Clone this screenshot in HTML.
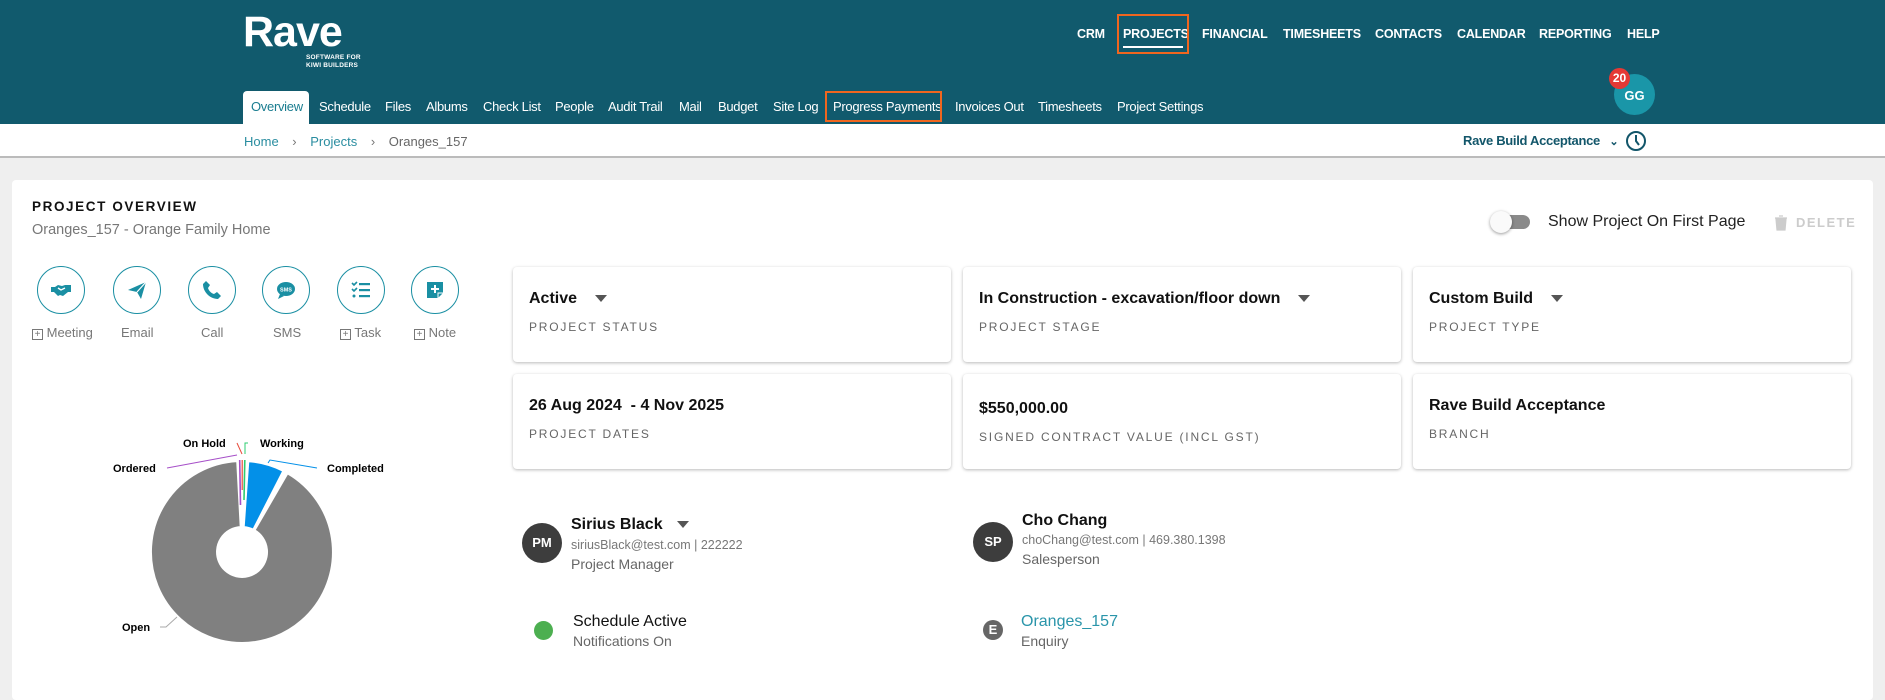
<!DOCTYPE html>
<html><head><meta charset="utf-8"><style>
*{margin:0;padding:0;box-sizing:border-box}
body{width:1885px;height:687px;overflow:hidden;background:#efefef;font-family:"Liberation Sans",sans-serif;position:relative}
.a{position:absolute;white-space:nowrap}
.hdr{position:absolute;left:0;top:0;width:1885px;height:124px;background:#115a6d}
.top{color:#fff;font-weight:bold;font-size:12.5px;top:27px;letter-spacing:-0.2px}
.tab{color:#fff;font-size:13px;top:99px;letter-spacing:-0.3px}
.crumb{position:absolute;left:0;top:124px;width:1885px;height:34px;background:#fff;border-bottom:2px solid #bbb}
.card{position:absolute;left:12px;top:180px;width:1861px;height:520px;background:#fff;border-radius:4px}
.ic{position:absolute;width:48px;height:48px;border:1.5px solid #1a8fa3;border-radius:50%;top:266px}
.ic svg{position:absolute;left:12px;top:12px}
.lbl{color:#777;font-size:13px;top:325px}
.cb{display:inline-block;width:11px;height:11px;border:1px solid #777;font-size:10px;line-height:9px;text-align:center;vertical-align:0px}
.box{position:absolute;width:438px;height:95px;background:#fff;border-radius:4px;box-shadow:0 1px 3px rgba(0,0,0,.28)}
.bt{position:absolute;left:16px;top:23px;font-size:16px;font-weight:bold;color:#111;white-space:nowrap}
.bl{position:absolute;left:16px;top:53px;font-size:12px;color:#666;letter-spacing:1.8px;white-space:nowrap}
.tri{display:inline-block;width:0;height:0;border-left:6px solid transparent;border-right:6px solid transparent;border-top:7px solid #555;margin-left:18px;vertical-align:middle}
.av{position:absolute;width:40px;height:40px;border-radius:50%;background:#3d3d3d;color:#fff;font-weight:bold;font-size:13px;text-align:center;line-height:40px}
</style></head><body>
<div class="hdr"></div>
<div class="a" style="left:243px;top:8px;color:#fff;font-weight:bold;font-size:43px;letter-spacing:-1px">Rave</div>
<div class="a" style="left:306px;top:54px;color:#fff;font-weight:bold;font-size:6.5px;line-height:8px;letter-spacing:.2px">SOFTWARE FOR<br>KIWI BUILDERS</div>
<div class="a top" style="left:1077px">CRM</div>
<div class="a top" style="left:1123px">PROJECTS</div>
<div class="a" style="left:1123px;top:46px;width:60px;height:2px;background:#fff"></div>
<div class="a" style="left:1117px;top:14px;width:72px;height:40px;border:2px solid #f0661f"></div>
<div class="a top" style="left:1202px">FINANCIAL</div>
<div class="a top" style="left:1283px">TIMESHEETS</div>
<div class="a top" style="left:1375px">CONTACTS</div>
<div class="a top" style="left:1457px">CALENDAR</div>
<div class="a top" style="left:1539px">REPORTING</div>
<div class="a top" style="left:1627px">HELP</div>
<div class="a" style="left:243px;top:91px;width:66px;height:34px;background:#fff;border-radius:4px 4px 0 0"></div>
<div class="a tab" style="left:251px;color:#1a7d90">Overview</div>
<div class="a tab" style="left:319px">Schedule</div>
<div class="a tab" style="left:385px">Files</div>
<div class="a tab" style="left:426px">Albums</div>
<div class="a tab" style="left:483px">Check List</div>
<div class="a tab" style="left:555px">People</div>
<div class="a tab" style="left:608px">Audit Trail</div>
<div class="a tab" style="left:679px">Mail</div>
<div class="a tab" style="left:718px">Budget</div>
<div class="a tab" style="left:773px">Site Log</div>
<div class="a tab" style="left:833px">Progress Payments</div>
<div class="a" style="left:825px;top:91px;width:117px;height:31px;border:2px solid #f0661f"></div>
<div class="a tab" style="left:955px">Invoices Out</div>
<div class="a tab" style="left:1038px">Timesheets</div>
<div class="a tab" style="left:1117px">Project Settings</div>
<div class="a" style="left:1614px;top:74px;width:41px;height:41px;border-radius:50%;background:#1a96a8;color:#fff;font-weight:bold;font-size:13px;text-align:center;line-height:43px">GG</div>
<div class="a" style="left:1609px;top:68px;width:21px;height:21px;border-radius:50%;background:#e53935;color:#fff;font-weight:bold;font-size:12px;text-align:center;line-height:21px">20</div>
<div class="crumb"></div>
<div class="a" style="left:244px;top:134px;font-size:13px;color:#2a8da0">Home <span style="color:#777;margin:0 10px">›</span> Projects <span style="color:#777;margin:0 10px">›</span> <span style="color:#666">Oranges_157</span></div>
<div class="a" style="left:1463px;top:133px;font-size:13px;font-weight:bold;color:#12566a;letter-spacing:-.3px">Rave Build Acceptance <span style="font-size:11px;margin-left:6px">&#8964;</span></div>
<svg class="a" style="left:1625px;top:130px" width="22" height="22" viewBox="0 0 22 22"><circle cx="11" cy="11" r="9" fill="none" stroke="#12566a" stroke-width="2"/><path d="M11 5v6l3 4" fill="none" stroke="#12566a" stroke-width="2"/></svg>
<div class="card"></div>
<div class="a" style="left:32px;top:199px;font-size:13.5px;font-weight:bold;letter-spacing:1.6px;color:#111">PROJECT OVERVIEW</div>
<div class="a" style="left:32px;top:222px;font-size:14.5px;color:#777">Oranges_157 - Orange Family Home</div>
<div class="ic" style="left:37px"><svg width="22" height="22" viewBox="0 0 22 22"><path d="M1 8h4l3-2 4 1 3-1h6v7h-3l-5 4-3-1-2 1-4-4H1z" fill="#1a8fa3"/><path d="M8 9l3 2 4-2" fill="none" stroke="#fff" stroke-width="1.4"/></svg></div>
<div class="ic" style="left:113px"><svg width="22" height="22" viewBox="0 0 22 22"><path d="M2 11L20 3 15 20 11 13z" fill="#1a8fa3"/><path d="M11 13L20 3" stroke="#fff" stroke-width="1.2"/></svg></div>
<div class="ic" style="left:188px"><svg width="22" height="22" viewBox="0 0 22 22"><path d="M5 2l4 4-2 3c1 3 3 5 6 6l3-2 4 4-3 3C9 20 2 13 2 5z" fill="#1a8fa3"/></svg></div>
<div class="ic" style="left:262px"><svg width="22" height="22" viewBox="0 0 22 22"><ellipse cx="11" cy="10" rx="9" ry="7" fill="#1a8fa3"/><path d="M5 15l-2 5 6-3z" fill="#1a8fa3"/><text x="11" y="12.5" font-size="5.5" fill="#fff" text-anchor="middle" font-family="Liberation Sans" font-weight="bold">SMS</text></svg></div>
<div class="ic" style="left:337px"><svg width="22" height="22" viewBox="0 0 22 22"><path d="M2 4l2 2 3-3M2 10l2 2 3-3" fill="none" stroke="#1a8fa3" stroke-width="1.6"/><rect x="9" y="4" width="11" height="2.2" fill="#1a8fa3"/><rect x="9" y="10" width="11" height="2.2" fill="#1a8fa3"/><rect x="9" y="16" width="11" height="2.2" fill="#1a8fa3"/><circle cx="4" cy="17" r="1.5" fill="#1a8fa3"/></svg></div>
<div class="ic" style="left:411px"><svg width="22" height="22" viewBox="0 0 22 22"><path d="M3 3h16v11l-5 5H3z" fill="#1a8fa3"/><path d="M11 6v8M7 10h8" stroke="#fff" stroke-width="2"/><path d="M14 19v-5h5" fill="none" stroke="#fff" stroke-width="1"/></svg></div>
<div class="a lbl" style="left:32px"><span class="cb">+</span> Meeting</div>
<div class="a lbl" style="left:121px">Email</div>
<div class="a lbl" style="left:201px">Call</div>
<div class="a lbl" style="left:273px">SMS</div>
<div class="a lbl" style="left:340px"><span class="cb">+</span> Task</div>
<div class="a lbl" style="left:414px"><span class="cb">+</span> Note</div>
<svg class="a" style="left:0;top:0" width="420" height="687" viewBox="0 0 420 687">
<path d="M287.5 473.2A91 91 0 1 1 237.2 461.1L240.7 527A25 25 0 1 0 254.5 530.3Z" fill="#808080" stroke="#fff" stroke-width="2" stroke-linejoin="round"/>
<path d="M248.3 461.2A91 91 0 0 1 283.3 470.9L253.3 529.7A25 25 0 0 0 243.7 527.1Z" fill="#0390e8" stroke="#fff" stroke-width="2" stroke-linejoin="round"/>
<line x1="239.7" y1="460" x2="240.5" y2="505" stroke="#a64fc8" stroke-width="1.6"/>
<line x1="242.2" y1="460" x2="242.2" y2="490" stroke="#e74c3c" stroke-width="1.2"/>
<line x1="244.8" y1="460" x2="244" y2="500" stroke="#2ecc71" stroke-width="1.6"/>
<polyline points="167,468 237,455" fill="none" stroke="#a64fc8" stroke-width="1"/>
<polyline points="237,443 242,454" fill="none" stroke="#e74c3c" stroke-width="1"/>
<polyline points="248,443 245,443 245,454" fill="none" stroke="#2ecc71" stroke-width="1"/>
<polyline points="317,468 270,460 268,463" fill="none" stroke="#0390e8" stroke-width="1"/>
<polyline points="160,627 166,627 177,617" fill="none" stroke="#aaa" stroke-width="1"/>
<g font-family="Liberation Sans" font-weight="bold" font-size="11" fill="#000">
<text x="113" y="472">Ordered</text><text x="183" y="447">On Hold</text><text x="260" y="447">Working</text><text x="327" y="472">Completed</text><text x="122" y="631">Open</text></g>
</svg>
<div class="a" style="left:1492px;top:215px;width:38px;height:14px;border-radius:7px;background:#8a8a8a"></div>
<div class="a" style="left:1490px;top:211px;width:22px;height:22px;border-radius:50%;background:#fafafa;box-shadow:0 1px 3px rgba(0,0,0,.4)"></div>
<div class="a" style="left:1548px;top:213px;font-size:16px;color:#222">Show Project On First Page</div>
<svg class="a" style="left:1774px;top:215px" width="14" height="16" viewBox="0 0 14 16"><path d="M1 3h12M5 1h4M2 4h10l-1 11H3z" fill="#ccc" stroke="#ccc" stroke-width="1.2"/></svg>
<div class="a" style="left:1796px;top:215px;font-size:13px;font-weight:bold;color:#ccc;letter-spacing:1.5px">DELETE</div>
<div class="box" style="left:513px;top:267px"><div class="bt">Active<span class="tri"></span></div><div class="bl">PROJECT STATUS</div></div>
<div class="box" style="left:963px;top:267px"><div class="bt">In Construction - excavation/floor down<span class="tri"></span></div><div class="bl">PROJECT STAGE</div></div>
<div class="box" style="left:1413px;top:267px"><div class="bt">Custom Build<span class="tri"></span></div><div class="bl">PROJECT TYPE</div></div>
<div class="box" style="left:513px;top:374px"><div class="bt">26 Aug 2024 &nbsp;- 4 Nov 2025</div><div class="bl">PROJECT DATES</div></div>
<div class="box" style="left:963px;top:374px"><div class="bt" style="top:26px">$550,000.00</div><div class="bl" style="top:56px">SIGNED CONTRACT VALUE (INCL GST)</div></div>
<div class="box" style="left:1413px;top:374px"><div class="bt">Rave Build Acceptance</div><div class="bl">BRANCH</div></div>
<div class="av" style="left:522px;top:523px">PM</div>
<div class="a" style="left:571px;top:516px;font-size:16px;font-weight:bold;color:#111">Sirius Black<span class="tri" style="margin-left:14px"></span></div>
<div class="a" style="left:571px;top:538px;font-size:12.5px;color:#777">siriusBlack@test.com | 222222</div>
<div class="a" style="left:571px;top:556px;font-size:14px;color:#666">Project Manager</div>
<div class="av" style="left:973px;top:522px">SP</div>
<div class="a" style="left:1022px;top:512px;font-size:16px;font-weight:bold;color:#111">Cho Chang</div>
<div class="a" style="left:1022px;top:533px;font-size:12.5px;color:#777">choChang@test.com | 469.380.1398</div>
<div class="a" style="left:1022px;top:551px;font-size:14px;color:#666">Salesperson</div>
<div class="a" style="left:534px;top:621px;width:19px;height:19px;border-radius:50%;background:#4caf50"></div>
<div class="a" style="left:573px;top:613px;font-size:16px;color:#111">Schedule Active</div>
<div class="a" style="left:573px;top:633px;font-size:14px;color:#666">Notifications On</div>
<div class="a" style="left:983px;top:620px;width:20px;height:20px;border-radius:50%;background:#666;color:#fff;font-weight:bold;font-size:13px;text-align:center;line-height:20px">E</div>
<div class="a" style="left:1021px;top:613px;font-size:16px;color:#2a95aa">Oranges_157</div>
<div class="a" style="left:1021px;top:633px;font-size:14px;color:#666">Enquiry</div>
</body></html>
